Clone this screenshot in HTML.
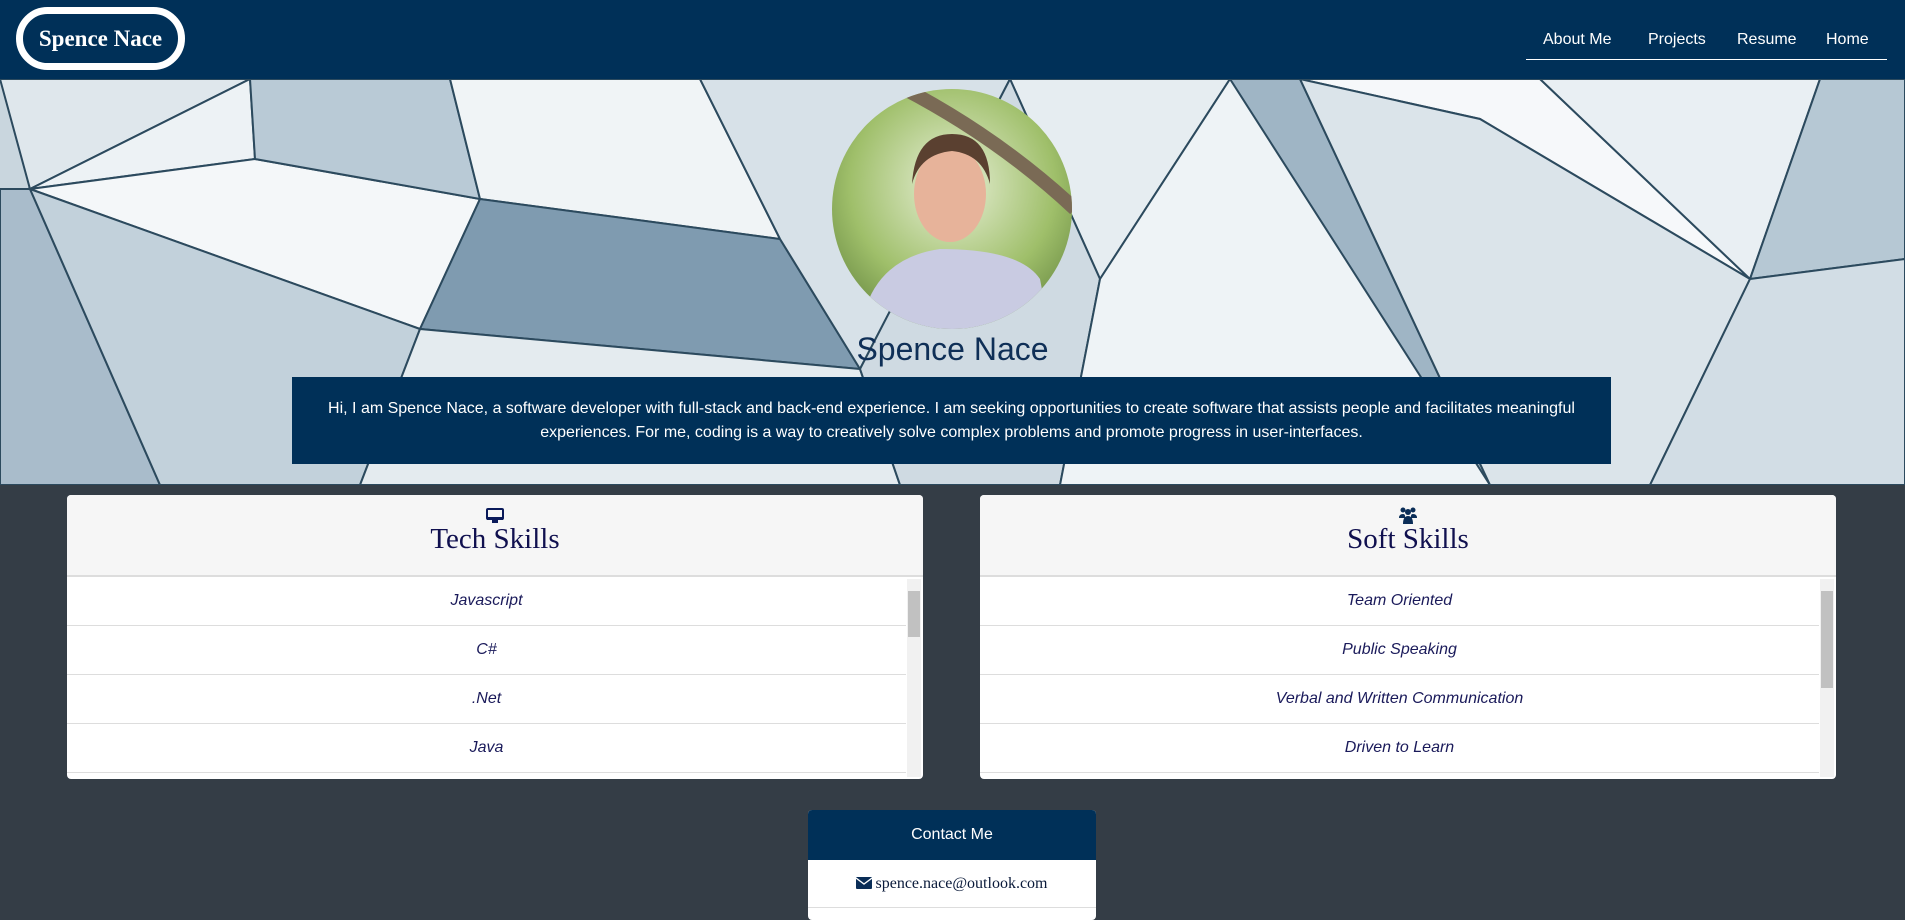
<!DOCTYPE html>
<html><head><meta charset="utf-8"><style>
*{margin:0;padding:0;box-sizing:border-box}
body{width:1905px;height:914px;overflow:hidden;background:#343d46;font-family:"Liberation Sans",sans-serif;position:relative}
.hdr{position:absolute;left:0;top:0;width:1905px;height:79px;background:#003058}
.logo{position:absolute;left:16px;top:7px;width:169px;height:63px;border:7px solid #fff;border-radius:32px;color:#fff;font:bold 23px/49px "Liberation Serif",serif;text-align:center}
.nav{position:absolute;top:31px;color:#fff;font-size:16px}
.uline{position:absolute;left:1526px;top:59px;width:361px;height:1px;background:#fff}
.hero{position:absolute;left:0;top:79px;width:1905px;height:406px;overflow:hidden}
.name{position:absolute;left:0;width:1905px;top:252px;text-align:center;color:#0f2f57;font-size:32px}
.box{position:absolute;left:292px;top:298px;width:1319px;height:87px;background:#003058;color:#fff;font-size:16px;line-height:24px;text-align:center;padding-top:20px}
.card{position:absolute;top:495px;width:856px;height:284px;background:#fff;border-radius:4px;overflow:hidden}
.ch{height:82px;background:#f6f6f6;border-bottom:2px solid #ddd;text-align:center;position:relative}
.ct{position:absolute;left:0;right:0;top:28px;font:29px "Liberation Serif",serif;color:#10104f}
.row{height:49px;border-bottom:1px solid #ddd;text-align:center;line-height:48px;font-style:italic;font-size:16px;color:#1a1a5a;margin-right:17px}
.sb{position:absolute;right:2px;top:84px;width:14px;height:198px;background:#f1f1f1}
.th{position:absolute;left:1px;top:12px;width:12px;background:#c1c1c1}
.contact{position:absolute;left:808px;top:810px;width:288px;height:110px;background:#fff;border-radius:4px;overflow:hidden}
</style></head><body>
<div class="hdr">
<div class="logo">Spence Nace</div>
<div class="nav" style="left:1543px">About Me</div>
<div class="nav" style="left:1648px">Projects</div>
<div class="nav" style="left:1737px">Resume</div>
<div class="nav" style="left:1826px">Home</div>
<div class="uline"></div>
</div>
<div class="hero">
<svg width="1905" height="406" viewBox="0 0 1905 406">
<rect width="1905" height="406" fill="#c9d6de"/>
<g stroke="#2c4a5e" stroke-width="2">
<polygon points="0,0 250,0 30,110" fill="#dfe7ec"/>
<polygon points="30,110 250,0 255,80" fill="#edf2f5"/>
<polygon points="30,110 255,80 480,120 420,250" fill="#f4f7f9"/>
<polygon points="0,110 30,110 160,406 0,406" fill="#a9bccb"/>
<polygon points="30,110 420,250 360,406 160,406" fill="#c2d1db"/>
<polygon points="255,80 480,120 450,0 250,0" fill="#b9cad6"/>
<polygon points="450,0 700,0 780,160 480,120" fill="#f0f4f6"/>
<polygon points="480,120 780,160 860,290 420,250" fill="#7f9bb0"/>
<polygon points="420,250 860,290 900,406 360,406" fill="#e4ebef"/>
<polygon points="700,0 1010,0 860,290 780,160" fill="#d7e1e8"/>
<polygon points="1010,0 1230,0 1100,200" fill="#e6edf1"/>
<polygon points="1010,0 1100,200 1060,406 900,406 860,290" fill="#cfdae2"/>
<polygon points="1100,200 1230,0 1300,0 1490,406 1060,406" fill="#eef3f6"/>
<polygon points="1230,0 1300,0 1490,406" fill="#9fb5c5"/>
<polygon points="1300,0 1540,0 1750,200 1480,40" fill="#f6f8fa"/>
<polygon points="1300,0 1480,40 1750,200 1650,406 1490,406" fill="#dbe4ea"/>
<polygon points="1540,0 1820,0 1750,200" fill="#e9eff3"/>
<polygon points="1820,0 1905,0 1905,180 1750,200" fill="#b6c8d4"/>
<polygon points="1750,200 1905,180 1905,406 1650,406" fill="#d2dde5"/>
</g>
<defs><clipPath id="c"><circle cx="952" cy="130" r="120"/></clipPath>
<radialGradient id="g" cx="0.5" cy="0.4" r="0.7"><stop offset="0" stop-color="#e8f0d8"/><stop offset="0.6" stop-color="#9fbf6a"/><stop offset="1" stop-color="#5e7f3a"/></radialGradient></defs>
<g clip-path="url(#c)">
<rect x="830" y="8" width="245" height="245" fill="url(#g)"/>
<path d="M905 10 Q1000 60 1075 130" stroke="#7a6a55" stroke-width="14" fill="none"/>
<path d="M860 253 Q870 180 940 170 Q1020 170 1040 200 L1050 253 Z" fill="#c9cbe2"/>
<ellipse cx="950" cy="115" rx="36" ry="48" fill="#e7b39a"/>
<path d="M912 105 Q915 55 952 55 Q990 55 990 105 Q982 75 952 72 Q920 75 912 105Z" fill="#5a4030"/>
</g>
</svg>
<div class="name">Spence Nace</div>
<div class="box">Hi, I am Spence Nace, a software developer with full-stack and back-end experience. I am seeking opportunities to create software that assists people and facilitates meaningful<br>experiences. For me, coding is a way to creatively solve complex problems and promote progress in user-interfaces.</div>
</div>

<div class="card" style="left:67px">
<div class="ch">
<svg style="position:absolute;left:419px;top:13px" width="18" height="16" viewBox="0 0 18 16"><rect x="1" y="1" width="16" height="10" rx="1" fill="none" stroke="#0a1a5a" stroke-width="2"/><rect x="1" y="9" width="16" height="3" fill="#0a1a5a"/><rect x="6" y="12" width="6" height="3" fill="#0a1a5a"/></svg>
<div class="ct">Tech Skills</div></div>
<div class="row">Javascript</div><div class="row">C#</div><div class="row">.Net</div><div class="row">Java</div><div class="row">SQL</div>
<div class="sb"><div class="th" style="height:46px"></div></div>
</div>

<div class="card" style="left:980px">
<div class="ch">
<svg style="position:absolute;left:419px;top:12px" width="18" height="17" viewBox="0 0 18 17"><g fill="#0a2d57"><circle cx="4" cy="3" r="2.5"/><circle cx="14" cy="3" r="2.5"/><circle cx="9" cy="5" r="3"/><path d="M0 11 Q0 7 4 7 Q6 7 6 9 L6 11Z"/><path d="M18 11 Q18 7 14 7 Q12 7 12 9 L12 11Z"/><path d="M4 17 Q4 9 9 9 Q14 9 14 17Z"/></g></svg>
<div class="ct">Soft Skills</div></div>
<div class="row">Team Oriented</div><div class="row">Public Speaking</div><div class="row">Verbal and Written Communication</div><div class="row">Driven to Learn</div><div class="row">Leadership</div>
<div class="sb"><div class="th" style="height:97px"></div></div>
</div>

<div class="contact">
<div style="height:50px;background:#003058;color:#fff;text-align:center;line-height:50px;font-size:16px">Contact Me</div>
<div style="height:48px;border-bottom:1px solid #ddd;text-align:center;font:16px/48px 'Liberation Serif',serif;color:#0a1a3a"><svg width="16" height="12" viewBox="0 0 16 12" style="vertical-align:-1px;margin-right:3px"><rect width="16" height="12" rx="1" fill="#0a2d57"/><path d="M0 1 L8 7 L16 1" stroke="#fff" stroke-width="1.3" fill="none"/></svg>spence.nace@outlook.com</div>
</div>
</body></html>
